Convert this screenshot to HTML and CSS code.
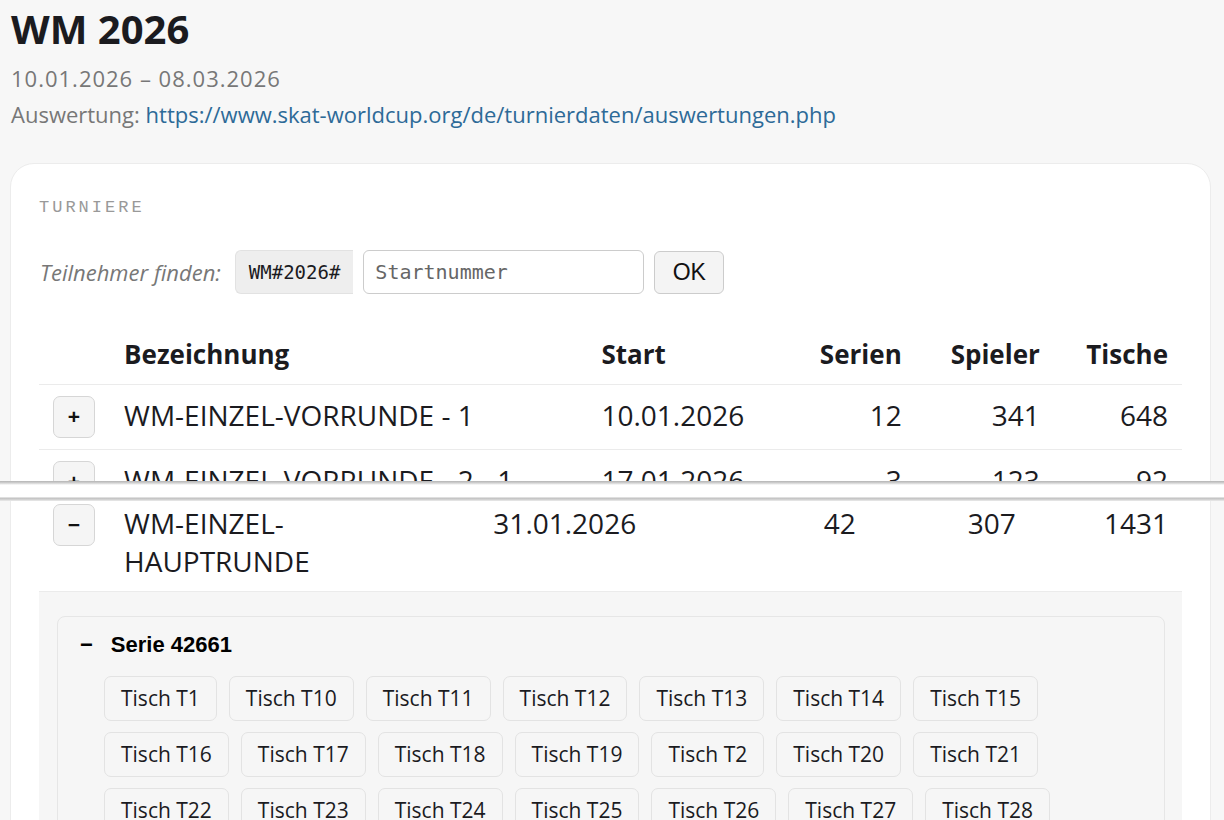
FILE: index.html
```html
<!DOCTYPE html>
<html lang="de">
<head>
  <meta charset="UTF-8">
  <meta name="viewport" content="width=device-width, initial-scale=1.0">
  <title>WM 2026</title>
  <link rel="stylesheet" href="styles.css">
</head>
<body>
  <!-- upper view: event header and the tournament list -->
  <div class="frame frame-top">
    <header class="event">
      <h1>WM 2026</h1>
      <p class="dates">10.01.2026 – 08.03.2026</p>
      <p class="source">Auswertung: <a href="#">https://www.skat-worldcup.org/de/turnierdaten/auswertungen.php</a></p>
    </header>

    <section class="card">
      <h2 class="section-title">TURNIERE</h2>

      <form class="finder">
        <label for="startnr">Teilnehmer finden:</label>
        <span class="prefix">WM#2026#</span>
        <input id="startnr" type="text" placeholder="Startnummer">
        <button type="button" class="btn-ok">OK</button>
      </form>

      <table class="turniere">
        <colgroup>
          <col style="width:71px">
          <col style="width:477px">
          <col style="width:193px">
          <col style="width:135px">
          <col style="width:138px">
          <col style="width:128px">
        </colgroup>
        <thead>
          <tr>
            <th></th>
            <th>Bezeichnung</th>
            <th>Start</th>
            <th class="num">Serien</th>
            <th class="num">Spieler</th>
            <th class="num">Tische</th>
          </tr>
        </thead>
        <tbody>
          <tr>
            <td><button type="button" class="toggle">+</button></td>
            <td>WM-EINZEL-VORRUNDE - 1</td>
            <td>10.01.2026</td>
            <td class="num">12</td>
            <td class="num">341</td>
            <td class="num">648</td>
          </tr>
          <tr>
            <td><button type="button" class="toggle">+</button></td>
            <td>WM-EINZEL-VORRUNDE - 2 - 1</td>
            <td>17.01.2026</td>
            <td class="num">3</td>
            <td class="num">123</td>
            <td class="num">92</td>
          </tr>
        </tbody>
      </table>
    </section>
  </div>

  <div class="cut-line"></div>

  <!-- lower view: the opened main round with its series -->
  <div class="frame frame-bottom">
    <section class="card card-cont">
      <table class="turniere">
        <colgroup>
          <col style="width:71px">
          <col style="width:369px">
          <col style="width:221px">
          <col style="width:169px">
          <col style="width:160px">
          <col style="width:152px">
        </colgroup>
        <tbody>
          <tr class="open">
            <td><button type="button" class="toggle">&minus;</button></td>
            <td class="name">WM-EINZEL-HAUPTRUNDE</td>
            <td>31.01.2026</td>
            <td class="num">42</td>
            <td class="num">307</td>
            <td class="num">1431</td>
          </tr>
          <tr class="detail">
            <td colspan="6">
              <div class="serie">
                <h3><span class="minus">&minus;</span>Serie 42661</h3>
                <div class="tische">
                  <button type="button" class="tisch">Tisch T1</button>
                  <button type="button" class="tisch">Tisch T10</button>
                  <button type="button" class="tisch">Tisch T11</button>
                  <button type="button" class="tisch">Tisch T12</button>
                  <button type="button" class="tisch">Tisch T13</button>
                  <button type="button" class="tisch">Tisch T14</button>
                  <button type="button" class="tisch">Tisch T15</button>
                  <button type="button" class="tisch">Tisch T16</button>
                  <button type="button" class="tisch">Tisch T17</button>
                  <button type="button" class="tisch">Tisch T18</button>
                  <button type="button" class="tisch">Tisch T19</button>
                  <button type="button" class="tisch">Tisch T2</button>
                  <button type="button" class="tisch">Tisch T20</button>
                  <button type="button" class="tisch">Tisch T21</button>
                  <button type="button" class="tisch">Tisch T22</button>
                  <button type="button" class="tisch">Tisch T23</button>
                  <button type="button" class="tisch">Tisch T24</button>
                  <button type="button" class="tisch">Tisch T25</button>
                  <button type="button" class="tisch">Tisch T26</button>
                  <button type="button" class="tisch">Tisch T27</button>
                  <button type="button" class="tisch">Tisch T28</button>
                </div>
              </div>
            </td>
          </tr>
        </tbody>
      </table>
    </section>
  </div>
</body>
</html>
```

FILE: styles.css
```css
body {
  margin: 0;
  background: #f7f7f7;
  color: #1b1b1f;
  font-family: 'Open Sans', sans-serif;
}

.frame {
  overflow: hidden;
}

.frame-top {
  height: 481px;
}

.frame-bottom {
  height: 319px;
}

/* seam between the two views */
.cut-line {
  height: 20px;
  background: linear-gradient(#b4b4b4, #d2d2d2 2px, #e8e8e8 3px, #fff 4px, #fff 16px, #bfbfbf 17px, #d8d8d8 19px, #eee 20px);
}

.event {
  padding: 4px 11px 0;
}

.event h1 {
  margin: 0;
  font-size: 40px;
  line-height: 50px;
  font-weight: 700;
}

.event p {
  margin: 0;
  font-size: 22px;
  line-height: 36px;
  color: #777;
}

.event .dates {
  margin-top: 6px;
  letter-spacing: 1px;
}

.event a {
  color: #2d6a97;
  text-decoration: none;
}

.card {
  margin: 31px 13px 0 10px;
  padding: 34px 28px 28px;
  background: #fff;
  border: 1px solid #ececec;
  border-radius: 24px;
}

.card-cont {
  margin-top: 0;
  padding-top: 0;
  border-top: none;
  border-radius: 0;
}

.section-title {
  margin: 0 0 32px;
  font-family: 'Liberation Mono', monospace;
  font-size: 17px;
  line-height: 20px;
  font-weight: 400;
  letter-spacing: 3px;
  color: #999;
}

.finder {
  display: flex;
  align-items: center;
  gap: 10px;
  height: 44px;
}

.finder label {
  margin-left: 1px;
  margin-right: 4px;
  font-style: italic;
  font-size: 22px;
  color: #777;
}

.prefix {
  box-sizing: border-box;
  height: 44px;
  padding: 0 13px;
  display: flex;
  align-items: center;
  background: #eee;
  border: 1px solid #e2e2e2;
  border-right: none;
  border-radius: 6px 0 0 6px;
  font-family: 'DejaVu Sans Mono', monospace;
  font-size: 19px;
}

.finder input {
  box-sizing: border-box;
  width: 281px;
  height: 44px;
  padding: 0 11px;
  border: 1px solid #ccc;
  border-radius: 6px;
  font-family: 'DejaVu Sans Mono', monospace;
  font-size: 20px;
}

.finder input::placeholder {
  color: #666;
}

.btn-ok {
  box-sizing: border-box;
  width: 70px;
  height: 43px;
  background: #f4f4f4;
  border: 1px solid #ccc;
  border-radius: 6px;
  font-family: 'Liberation Sans', Arial, sans-serif;
  font-size: 23px;
  color: #111;
}

.turniere {
  width: 100%;
  margin-top: 30px;
  border-collapse: collapse;
  table-layout: fixed;
  font-size: 28px;
  line-height: 38px;
}

.card-cont .turniere {
  margin-top: 0;
}

.turniere th,
.turniere td {
  padding: 11px 14px;
  text-align: left;
  vertical-align: top;
}

.turniere th {
  font-size: 26px;
  font-weight: 700;
  border-bottom: 1px solid #ebebeb;
}

.turniere tbody tr {
  border-bottom: 1px solid #ebebeb;
}

.turniere .num {
  text-align: right;
}

.turniere tr.open td {
  padding-top: 3px;
}

.turniere td.name {
  padding-right: 48px;
}

.toggle {
  display: block;
  box-sizing: border-box;
  width: 42px;
  height: 42px;
  padding: 0;
  background: #f5f5f5;
  border: 1px solid #d6d6d6;
  border-radius: 7px;
  font-family: 'Liberation Sans', Arial, sans-serif;
  font-size: 21px;
  font-weight: 700;
  color: #111;
}

.turniere tr.detail {
  border-bottom: none;
}

.turniere tr.detail td {
  padding: 24px 17px 0 18px;
  background: #f6f6f6;
}

.serie {
  padding: 15px 22px 20px;
  border: 1px solid #e6e6e6;
  border-radius: 8px;
}

.serie h3 {
  margin: 0 0 18px;
  font-family: 'Liberation Sans', Arial, sans-serif;
  font-size: 22px;
  line-height: 26px;
  font-weight: 700;
  color: #000;
}

.serie .minus {
  margin-right: 18px;
}

.tische {
  display: flex;
  flex-wrap: wrap;
  gap: 11px 12px;
  padding-left: 24px;
}

.tisch {
  padding: 7px 16px;
  background: #f6f6f6;
  border: 1px solid #e3e3e3;
  border-radius: 7px;
  font-family: 'Open Sans', sans-serif;
  font-size: 21px;
  line-height: 29px;
  color: #1b1b1f;
}
```
